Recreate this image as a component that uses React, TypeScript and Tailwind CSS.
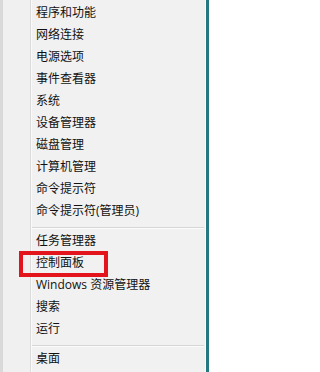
import React from "react";

const groupA = [
  "程序和功能",
  "网络连接",
  "电源选项",
  "事件查看器",
  "系统",
  "设备管理器",
  "磁盘管理",
  "计算机管理",
  "命令提示符",
  "命令提示符(管理员)",
];
const groupB = ["任务管理器", "控制面板", "Windows 资源管理器", "搜索", "运行"];
const groupC = ["桌面"];

function Item({ label }: { label: string }) {
  return (
    <div className="h-[22px] flex items-center pl-[4px] text-[12px] leading-none text-[#111] whitespace-nowrap">
      {label}
    </div>
  );
}

function Sep() {
  return (
    <div className="h-[8px] pt-[5px]">
      <div className="h-[1px] bg-[#d6d6d6] mr-[1px]" />
      <div className="h-[1px] bg-[#fbfbfb] mr-[1px]" />
    </div>
  );
}

export default function App() {
  return (
    <div
      className="relative w-[209px] h-[372px] flex bg-[#f0f0f0] overflow-hidden"
      style={{ fontFamily: '"Segoe UI", "Open Sans", "Noto Sans CJK SC", sans-serif' }}
    >
      <div className="w-[3px] bg-[#d9d9d9]" />
      <div className="w-[27px] bg-[#f0f0f0]" />
      <div className="w-[1px] bg-[#dcdcdc]" />
      <div className="flex-1 flex flex-col pt-[2px] border-l border-[#fafafa] bg-[#f1f1f1]">
        {groupA.map((l) => (
          <Item key={l} label={l} />
        ))}
        <Sep />
        {groupB.map((l) => (
          <Item key={l} label={l} />
        ))}
        <Sep />
        {groupC.map((l) => (
          <Item key={l} label={l} />
        ))}
      </div>
      <div className="w-[1px] bg-[#fdfdfd]" />
      <div className="w-[3px] bg-[#237a80]" />
      <div className="absolute left-[19px] top-[251px] w-[89px] h-[26px] border-[4px] border-[#e3141c]" />
    </div>
  );
}
